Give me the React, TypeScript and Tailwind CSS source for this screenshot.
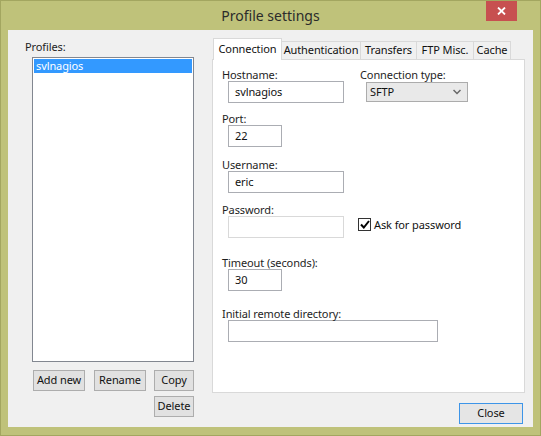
import React from "react"

const font = { fontFamily: '"Noto Sans", "Liberation Sans", sans-serif', letterSpacing: "-0.1px" }

function Field({
  label,
  value,
  width,
  disabled,
  className = "",
}: {
  label: string
  value?: string
  width: string
  disabled?: boolean
  className?: string
}) {
  return (
    <div className={className}>
      <div className="text-[11px] leading-[13px] text-[#1e1e1e]">{label}</div>
      <div
        className={`ml-[6px] h-[22px] ${width} border bg-white px-[6px] text-[11px] leading-[20px] text-[#111] ${
          disabled ? "border-[#d9d9d9]" : "border-[#abadb3]"
        }`}
      >
        {value}
      </div>
    </div>
  )
}

function Btn({ label, className = "" }: { label: string; className?: string }) {
  return (
    <div
      className={`flex h-[21px] items-center justify-center border border-[#adadad] bg-[#e1e1e1] text-[11px] text-[#111] ${className}`}
    >
      {label}
    </div>
  )
}

export default function App() {
  const tabs = [
    { name: "Authentication", w: "w-[80px]" },
    { name: "Transfers", w: "w-[57px]" },
    { name: "FTP Misc.", w: "w-[58px]" },
    { name: "Cache", w: "w-[38px]" },
  ]

  return (
    <div
      style={font}
      className="relative flex h-[436px] w-[541px] flex-col border border-[#a3a660] bg-[#bfc27a]"
    >
      {/* title bar */}
      <div className="flex h-[28px] items-center justify-center text-[14px] tracking-normal text-[#2b2b2b]">
        Profile settings
      </div>
      <div className="absolute left-[485px] top-0 flex h-[20px] w-[31px] items-center justify-center bg-[#c75050]">
        <svg width="9" height="8" viewBox="0 0 9 8">
          <path d="M1 0.5 L8 7.5 M8 0.5 L1 7.5" stroke="white" strokeWidth="1.8" />
        </svg>
      </div>

      {/* client */}
      <div className="ml-[7px] mt-[1px] flex h-[397px] w-[525px] bg-[#f0f0f0]">
        {/* left column */}
        <div className="flex w-[204px] flex-col pl-[17px] pt-[9px]">
          <div className="text-[11px] leading-[16px] text-[#1e1e1e]">Profiles:</div>
          <div className="ml-[7px] mt-[2px] h-[305px] w-[162px] border border-[#828790] bg-white p-[1px]">
            <div className="h-[14px] bg-[#3399ff] pl-[2px] text-[11px] leading-[14px] text-white">
              svlnagios
            </div>
          </div>
          <div className="ml-[8px] mt-[8px] flex w-[161px] gap-[8px]">
            <Btn label="Add new" className="w-[52px]" />
            <Btn label="Rename" className="ml-[1px] w-[52px]" />
            <Btn label="Copy" className="w-[40px]" />
          </div>
          <div className="ml-[8px] mt-[5px] flex w-[161px] justify-end">
            <Btn label="Delete" className="w-[40px]" />
          </div>
        </div>

        {/* right column */}
        <div className="flex w-[313px] flex-col pt-[8px]">
          <div className="relative z-10 flex items-end pl-[1px]">
            <div className="-mb-[1px] flex h-[22px] w-[69px] items-start justify-center border border-b-0 border-[#d9d9d9] bg-white pt-[3px] text-[11px] leading-[14px] text-[#111]">
              Connection
            </div>
            {tabs.map((t) => (
              <div
                key={t.name}
                className={`flex h-[18px] ${t.w} -ml-[1px] items-center justify-center border border-b-0 border-[#d9d9d9] bg-[#f0f0f0] text-[11px] text-[#111] first:ml-0`}
              >
                {t.name}
              </div>
            ))}
          </div>
          <div className="h-[334px] border border-[#d9d9d9] bg-white pl-[9px] pt-[8px]">
            <div className="flex">
              <Field label="Hostname:" value="svlnagios" width="w-[116px]" className="w-[138px]" />
              <div>
                <div className="text-[11px] leading-[13px] text-[#1e1e1e]">Connection type:</div>
                <div className="ml-[6px] mt-[1px] flex h-[20px] w-[102px] items-center justify-between border border-[#acacac] bg-[#e9e9e9] pl-[3px] pr-[6px] text-[11px] text-[#111]">
                  <span>SFTP</span>
                  <svg width="8" height="6" viewBox="0 0 8 6">
                    <path d="M0.5 1 L4 4.5 L7.5 1" fill="none" stroke="#666" strokeWidth="1.5" />
                  </svg>
                </div>
              </div>
            </div>
            <Field label="Port:" value="22" width="w-[54px]" className="mt-[9px]" />
            <Field label="Username:" value="eric" width="w-[116px]" className="mt-[11px]" />
            <div className="mt-[10px] flex">
              <Field label="Password:" width="w-[116px]" disabled className="w-[136px]" />
              <div className="mt-[8px] flex items-center gap-[3px]">
                <div className="flex h-[13px] w-[13px] items-center justify-center border border-[#333] bg-white">
                  <svg width="10" height="9" viewBox="0 0 10 9">
                    <path d="M1 4.5 L3.8 7.5 L9 1" fill="none" stroke="#000" strokeWidth="2" />
                  </svg>
                </div>
                <span className="text-[11px] leading-[13px] text-[#111]">Ask for password</span>
              </div>
            </div>
            <Field label="Timeout (seconds):" value="30" width="w-[54px]" className="mt-[18px]" />
            <Field label="Initial remote directory:" width="w-[210px]" className="mt-[16px]" />
          </div>
          <div className="mt-[10px] flex justify-end">
            <div className="mr-[2px] flex h-[21px] w-[64px] items-center justify-center border border-[#3d95e8] bg-[#e5e5e5] text-[11px] text-[#111]">
              Close
            </div>
          </div>
        </div>
      </div>
    </div>
  )
}
